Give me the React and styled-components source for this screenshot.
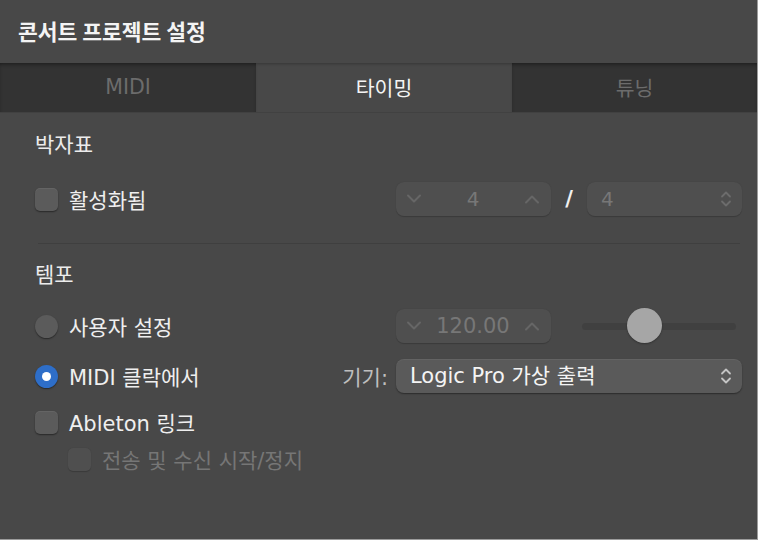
import React from "react";
import styled, { createGlobalStyle } from "styled-components";

const Global = createGlobalStyle`
  html, body { margin: 0; padding: 0; background: #484848; }
  * { box-sizing: border-box; }
  body { font-family: "DejaVu Sans", "Noto Sans CJK KR", sans-serif; }
`;

const Window = styled.div`
  width: 758px;
  height: 540px;
  background: #484848;
  border-right: 1px solid #9c9c9c;
  border-bottom: 1px solid #9c9c9c;
  display: flex;
  flex-direction: column;
  color: #ececec;
  font-family: "DejaVu Sans", "Noto Sans CJK KR", sans-serif;
  font-size: 21px;
  overflow: hidden;
`;

const Header = styled.div`
  height: 63px;
  display: flex;
  align-items: center;
  padding-left: 18px;
  padding-bottom: 2px;
  font-family: "Noto Sans CJK KR", sans-serif;
  font-weight: 700;
  font-size: 21.5px;
  color: #f4f4f4;
`;

const TabBar = styled.div`
  display: grid;
  grid-template-columns: 256px 256px 1fr;
  height: 50px;
  border-bottom: 1px solid #414141;
`;

const Tab = styled.div`
  display: flex;
  align-items: center;
  justify-content: center;
  padding-bottom: 1px;
  font-size: 20.5px;
  background: ${(p) => (p.$active ? "#484848" : "#333333")};
  color: ${(p) => (p.$active ? "#f4f4f4" : "#6c6c6c")};
  box-shadow: ${(p) =>
    p.$active
      ? "inset 0 2px 3px -1px rgba(0,0,0,0.25)"
      : "inset 0 3px 4px -2px rgba(0,0,0,0.5)"};
`;

const Content = styled.div`
  display: flex;
  flex-direction: column;
  padding: 20px 15px 0 35px;
`;

const Heading = styled.div`
  height: 24px;
  line-height: 24px;
  font-size: 21px;
  color: #ececec;
  margin-top: ${(p) => p.$mt || 0}px;
`;

const Row = styled.div`
  display: flex;
  align-items: center;
  height: ${(p) => p.$h || 34}px;
  margin-top: ${(p) => p.$mt || 0}px;
  padding-left: ${(p) => p.$indent || 0}px;
`;

const Left = styled.label`
  flex: 1;
  display: flex;
  align-items: center;
  gap: 11px;
  color: ${(p) => (p.$disabled ? "#767676" : "#efefef")};
  white-space: nowrap;
`;

const Controls = styled.div`
  width: 346px;
  display: flex;
  align-items: center;
`;

const CheckBox = styled.span`
  width: 23px;
  height: 23px;
  border-radius: 5px;
  flex: none;
  background: ${(p) => (p.$disabled ? "#4f4f4f" : "#5b5b5b")};
  box-shadow: ${(p) =>
    p.$disabled
      ? "0 0.5px 1px rgba(0,0,0,0.2)"
      : "0 1px 1.5px rgba(0,0,0,0.45), inset 0 1px 0 rgba(255,255,255,0.06)"};
`;

const Radio = styled.span`
  width: 23px;
  height: 23px;
  border-radius: 50%;
  flex: none;
  display: flex;
  align-items: center;
  justify-content: center;
  background: ${(p) => (p.$checked ? "#2e6ec8" : "#5b5b5b")};
  box-shadow: 0 1px 1.5px rgba(0, 0, 0, 0.45);
  &::after {
    content: "";
    display: ${(p) => (p.$checked ? "block" : "none")};
    width: 9px;
    height: 9px;
    border-radius: 50%;
    background: #ffffff;
  }
`;

const Box = styled.div`
  height: 34px;
  width: ${(p) => (p.$w ? `${p.$w}px` : "auto")};
  flex: ${(p) => (p.$w ? "none" : "1")};
  border-radius: 8px;
  display: flex;
  align-items: center;
  justify-content: space-between;
  padding: 0 ${(p) => p.$pr || 10}px 0 ${(p) => p.$pl || 10}px;
  background: ${(p) => (p.$enabled ? "#5a5a5a" : "#4f4f4f")};
  color: ${(p) => (p.$enabled ? "#f4f4f4" : "#777777")};
  box-shadow: ${(p) =>
    p.$enabled
      ? "0 1px 1.5px rgba(0,0,0,0.4), inset 0 1px 0 rgba(255,255,255,0.06)"
      : "0 0.5px 1px rgba(0,0,0,0.2)"};
  font-size: ${(p) => p.$fs || 20}px;
`;

const Value = styled.span`
  line-height: 1;
  white-space: nowrap;
`;

const Slash = styled.span`
  width: 36px;
  text-align: center;
  font-weight: 700;
  color: #f0f0f0;
  font-size: 21px;
`;

const DeviceLabel = styled.span`
  color: #bebebe;
  margin-right: 8px;
  white-space: nowrap;
`;

const Separator = styled.div`
  height: 1px;
  background: #3f3f3f;
  margin: 27px 2px 0 3px;
`;

const SliderWrap = styled.div`
  flex: 1;
  margin: 0 6px 0 31px;
  height: 36px;
  position: relative;
  display: flex;
  align-items: center;
`;

const Track = styled.div`
  width: 100%;
  height: 7px;
  border-radius: 4px;
  background: #404040;
`;

const Thumb = styled.div`
  position: absolute;
  top: 0;
  width: 35px;
  height: 35px;
  border-radius: 50%;
  background: #a6a6a6;
  box-shadow: 0 1px 2px rgba(0, 0, 0, 0.3);
`;

const Chevron = ({ up, color }) => (
  <svg width="16" height="10" viewBox="0 0 16 10">
    <path
      d={up ? "M2 8.5 L8 2.5 L14 8.5" : "M2 1.5 L8 7.5 L14 1.5"}
      fill="none"
      stroke={color}
      strokeWidth="2"
      strokeLinecap="round"
      strokeLinejoin="round"
    />
  </svg>
);

const UpDown = ({ color }) => (
  <svg width="12" height="20" viewBox="0 0 12 20">
    <path
      d="M2 7.5 L6 3.5 L10 7.5 M2 12.5 L6 16.5 L10 12.5"
      fill="none"
      stroke={color}
      strokeWidth="1.8"
      strokeLinecap="round"
      strokeLinejoin="round"
    />
  </svg>
);

const Stepper = ({ value, fs }) => (
  <Box $w={155} $pl={10} $pr={11} $fs={fs}>
    <Chevron color="#666666" />
    <Value>{value}</Value>
    <Chevron up color="#666666" />
  </Box>
);

export default function App() {
  return (
    <>
      <Global />
      <Window>
        <Header>콘서트 프로젝트 설정</Header>
        <TabBar>
          <Tab>MIDI</Tab>
          <Tab $active>타이밍</Tab>
          <Tab>튜닝</Tab>
        </TabBar>
        <Content>
          <Heading>박자표</Heading>
          <Row $mt={25}>
            <Left>
              <CheckBox />
              활성화됨
            </Left>
            <Controls>
              <Stepper value="4" />
              <Slash>/</Slash>
              <Box $pl={14} $pr={10}>
                <Value>4</Value>
                <UpDown color="#6c6c6c" />
              </Box>
            </Controls>
          </Row>
          <Separator />
          <Heading $mt={19}>템포</Heading>
          <Row $mt={22}>
            <Left>
              <Radio />
              사용자 설정
            </Left>
            <Controls>
              <Stepper value="120.00" fs={21} />
              <SliderWrap>
                <Track />
                <Thumb style={{ left: "45px" }} />
              </SliderWrap>
            </Controls>
          </Row>
          <Row $mt={16}>
            <Left>
              <Radio $checked />
              MIDI 클락에서
            </Left>
            <DeviceLabel>기기:</DeviceLabel>
            <Controls>
              <Box $enabled $pl={14} $pr={10} $fs={21}>
                <Value>Logic Pro 가상 출력</Value>
                <UpDown color="#c4c4c4" />
              </Box>
            </Controls>
          </Row>
          <Row $mt={12}>
            <Left>
              <CheckBox />
              Ableton 링크
            </Left>
          </Row>
          <Row $mt={8} $h={24} $indent={33}>
            <Left $disabled>
              <CheckBox $disabled />
              전송 및 수신 시작/정지
            </Left>
          </Row>
        </Content>
      </Window>
    </>
  );
}
